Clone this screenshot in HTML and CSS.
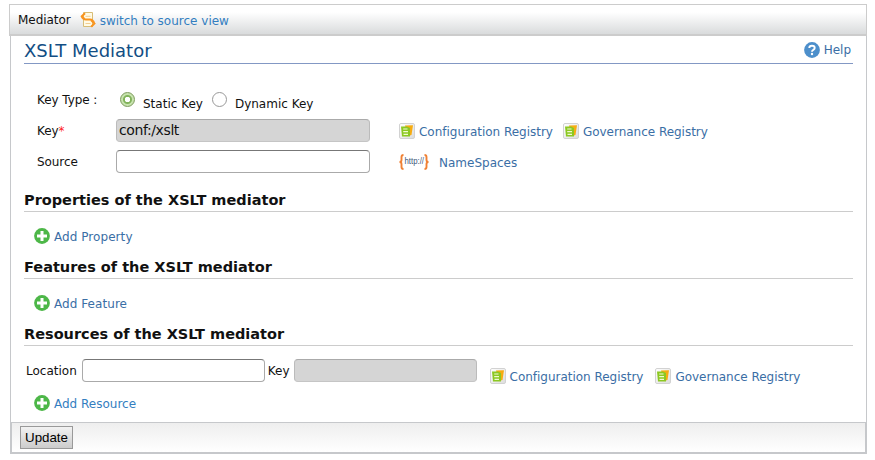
FILE: index.html
```html
<!DOCTYPE html>
<html lang="en">
<head>
<meta charset="utf-8">
<title>XSLT Mediator</title>
<link rel="stylesheet" href="styles.css">
</head>
<body>
<svg class="defs" width="0" height="0" aria-hidden="true">
  <defs>
    <linearGradient id="tile" x1="0" y1="0" x2="1" y2="1"><stop offset="0" stop-color="#fff"/><stop offset="1" stop-color="#dcdcdc"/></linearGradient>
    <symbol id="registry" viewBox="0 0 16 16">
      <rect x=".5" y=".5" width="15" height="15" rx="1.500" fill="url(#tile)" stroke="#d2d2d2"/>
      <path d="M6 2.500L14 2.200L12.500 12L9 13z" fill="#f6ac12"/>
      <path d="M2 3.500H8L11 5V13.500H3z" fill="#8cc822"/>
      <path d="M4.200 6h4.300M4.200 8.700h4.800M4.500 11.300h4.500" stroke="#f0fad2" stroke-width="1.200"/>
    </symbol>
    <symbol id="add" viewBox="0 0 16 16">
      <circle cx="8" cy="8" r="7.900" fill="#4db748"/>
      <path d="M8 3v10M3 8h10" stroke="#fff" stroke-width="3"/>
    </symbol>
  </defs>
</svg>
<div class="page">
  <header class="bar">
    <span class="crumb">Mediator</span>
    <svg class="source-icon" viewBox="0 0 16 16" width="16" height="16"><path d="M3.500 .5h9v14h-9z" fill="#fffbe6" stroke="#d8bd76"/><path d="M5 1.200L1.800 4.300L5 7.400M1.800 4.700Q3 7.500 6 7.600h4q3 .2 4.200 3.500M11.200 8.300L14.400 11.500L11.200 14.700" fill="none" stroke="#f9941e" stroke-width="2"/><path d="M5.500 4.300h5M5.500 11.500h5" stroke="#edc27c" stroke-width=".8"/></svg>
    <a class="bright">switch to source view</a>
  </header>
  <main class="panel">
    <div class="title">
      <h1>XSLT Mediator</h1>
      <a class="help"><svg viewBox="0 0 16 16" width="16" height="16"><circle cx="8" cy="8" r="7.900" fill="#4d8fcb"/><path d="M5.300 6Q5.300 3.700 8 3.700t2.700 2.200q0 1.200-1.400 2Q8 8.600 8 9.800" fill="none" stroke="#fff" stroke-width="1.900"/><circle cx="8" cy="12" r="1.200" fill="#fff"/></svg>Help</a>
    </div>
    <div class="form">
      <div class="row types">
        <span class="label">Key Type :</span>
        <span class="radio on"></span><span class="choice">Static Key</span>
        <span class="radio"></span><span class="choice">Dynamic Key</span>
      </div>
      <div class="row key">
        <span class="label">Key<b class="req">*</b></span>
        <span class="field gray">conf:/xslt</span>
        <a class="reg"><svg><use href="#registry"/></svg>Configuration Registry</a>
        <a class="reg"><svg><use href="#registry"/></svg>Governance Registry</a>
      </div>
      <div class="row source">
        <span class="label">Source</span>
        <span class="field"></span>
        <a class="ns"><svg viewBox="0 0 30 16" width="30" height="16"><path d="M4.500 1Q2.500 1 2.500 3v3Q2.500 8 .5 8q2 0 2 2v3q0 2 2 2M25.500 1q2 0 2 2v3q0 2 2 2q-2 0-2 2v3q0 2-2 2" fill="none" stroke="#f08033" stroke-width="1.900"/><text class="http" x="5.500" y="9.500" textLength="19.500" lengthAdjust="spacingAndGlyphs">http://</text></svg>NameSpaces</a>
      </div>
    </div>
    <h2>Properties of the XSLT mediator</h2>
    <a class="add"><svg><use href="#add"/></svg>Add Property</a>
    <h2>Features of the XSLT mediator</h2>
    <a class="add"><svg><use href="#add"/></svg>Add Feature</a>
    <h2>Resources of the XSLT mediator</h2>
    <div class="resource">
      <span>Location</span><span class="field short"></span>
      <span class="keyword">Key</span><span class="field short gray"></span>
      <a class="reg"><svg><use href="#registry"/></svg>Configuration Registry</a>
      <a class="reg"><svg><use href="#registry"/></svg>Governance Registry</a>
    </div>
    <a class="add last bright"><svg><use href="#add"/></svg>Add Resource</a>
    <footer><button>Update</button></footer>
  </main>
</div>
</body>
</html>
```
FILE: styles.css
```css
* { box-sizing: border-box; }
body { margin: 0; background: #fff; color: #111; font: 12px/16px "DejaVu Sans", sans-serif; }
.defs { position: absolute; }
.page { width: 858px; margin: 4px 0 0 9px; }
svg { flex: none; }
a { color: #3a6ea5; white-space: nowrap; }
.bright { color: #337ec0; }
.bar { display: flex; align-items: center; height: 32px; padding: 0 8px 1px; border: 1px solid #ccc; border-bottom: 2px solid #ccc; background: linear-gradient(#fff 25%, #d9dbdc); }
.crumb { padding-top: 1px; letter-spacing: -.05px; }
.source-icon { margin: 2px 4px 0 9px; }
.bar a { padding-top: 3px; }
.panel { display: flex; flex-direction: column; height: 418px; margin-left: 1px; border: 1px solid #c6c8cb; border-top: 0; border-bottom: 0; }
.title { display: flex; justify-content: space-between; height: 28px; margin: 0 13px; border-bottom: 1px solid #8398c4; }
h1 { margin: 4px 0 0; color: #124e84; font-size: 18px; line-height: 22px; font-weight: normal; }
.help { display: flex; align-items: center; gap: 4px; margin-right: 2px; }
.form { height: 126px; padding: 23px 0 0 26px; }
.row { display: flex; align-items: flex-start; height: 31px; }
.label { width: 79px; line-height: 26px; letter-spacing: -.08px; }
.req { color: #f22; font-weight: normal; }
.radio { width: 15px; height: 15px; margin: 5px 8px 0 4px; border: 1px solid #999; border-radius: 50%; background: #fff; }
.radio.on { border: 1px solid #7c9a5c; background: radial-gradient(#fff 0 2.500px, #82b35c 3px 4px, #c7e3ae 5px); }
.choice { margin-right: 5px; line-height: 34px; }
.field { width: 254px; height: 23px; border: 1px solid #aaa; border-top-color: #777; border-radius: 4px; padding-left: 2px; font-size: 14px; line-height: 20px; letter-spacing: -.4px; }
.gray { background: #d5d5d5; border-color: #aaa #bbb #c5c5c5; }
.key .field, .source .field { margin: 1px 29px 0 0; }
.reg { display: flex; align-items: center; gap: 4px; height: 16px; margin-right: 10px; letter-spacing: -.02px; }
.reg svg, .add svg { width: 16px; height: 16px; }
.reg svg { margin-top: -2px; }
.key .reg { margin-top: 6px; }
.ns { display: flex; align-items: center; gap: 10px; margin-top: 6px; }
.ns svg { margin-top: -2px; }
.http { fill: #40577b; font: 9px "Liberation Sans", sans-serif; }
h2 { flex: none; height: 20px; margin: 2px 13px 0; border-bottom: 1px solid #ccc; font-size: 14.5px; line-height: 16px; font-weight: bold; }
.add { display: flex; align-items: center; gap: 4px; height: 16px; margin: 17px 0 12px 23px; letter-spacing: .06px; }
.add svg { margin-top: -2px; }
.resource { display: flex; height: 40px; padding: 13px 0 0 15px; line-height: 24px; }
.short { width: 183px; margin-left: 5px; }
.keyword { margin-left: 3px; }
.resource .short.gray { margin: 0 13px 0 4px; }
.resource .reg { margin: 10px 12px 0 0; line-height: 16px; }
.last { margin: 10px 0 0 23px; letter-spacing: 0; }
footer { height: 32px; margin-top: auto; padding: 3px 0 0 8px; border: 1px solid #c6c8cb; border-width: 1px 1px 2px; background: linear-gradient(#eee, #fff); }
button { display: block; width: 53px; height: 23px; padding: 0; border: 1px solid #999; background: linear-gradient(#f2f2f2, #ccc); color: #000; font: 13.333px "Liberation Sans", sans-serif; }
```
